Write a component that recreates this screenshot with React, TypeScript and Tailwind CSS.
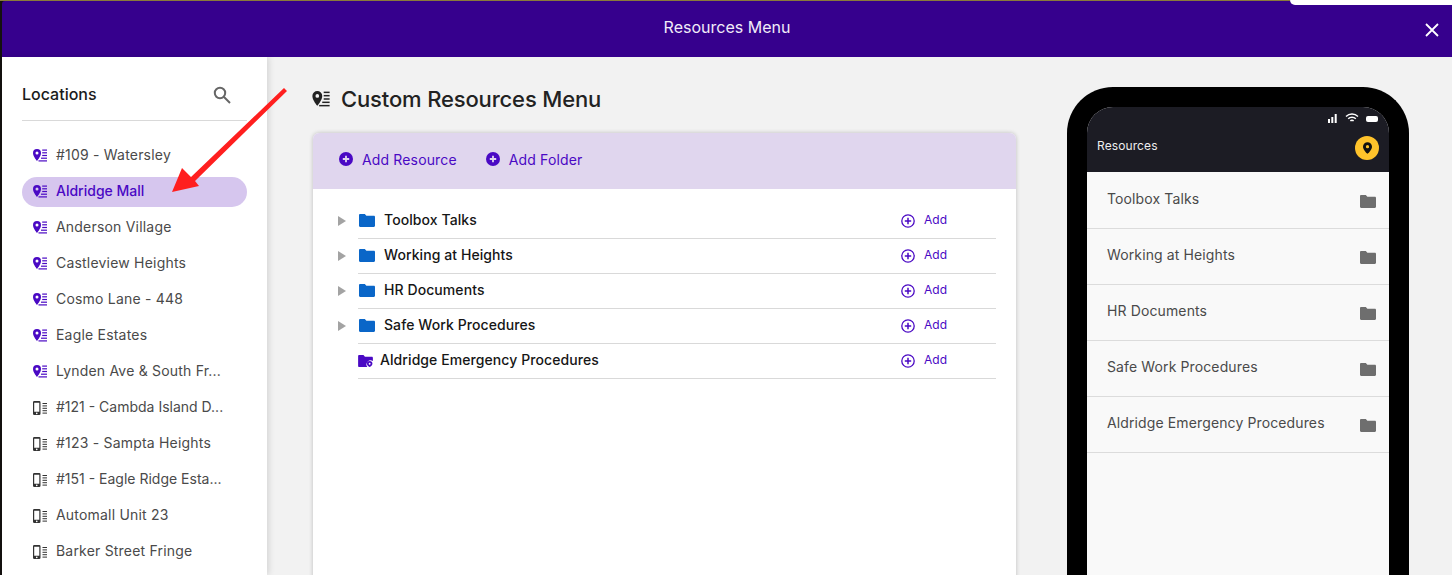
import React from "react";

const FONT = "font-['Inter','Noto_Sans',sans-serif]";

function PinList({ className }: { className?: string }) {
  return (
    <svg viewBox="0 0 14 13" className={className} fill="currentColor">
      <path fillRule="evenodd" d="M4 0a4 4 0 0 1 4 4c0 2.700-2.500 6.200-4 8C2.500 10.200 0 6.700 0 4a4 4 0 0 1 4-4Zm0 2.500a1.500 1.500 0 1 0 0 3 1.500 1.500 0 0 0 0-3Z" />
      <rect x="9.200" y="0.500" width="4.800" height="1.200" />
      <rect x="9.200" y="3.200" width="4.800" height="1.200" />
      <rect x="9.200" y="5.900" width="4.800" height="1.200" />
      <rect x="8" y="8.600" width="6" height="1.200" />
      <rect x="5.500" y="11.300" width="8.500" height="1.200" />
    </svg>
  );
}

function PhoneList({ className }: { className?: string }) {
  return (
    <svg viewBox="0 0 14 14" className={className} fill="currentColor">
      <path fillRule="evenodd" d="M1.300 0h4.900a1.300 1.300 0 0 1 1.300 1.300v11.400A1.300 1.300 0 0 1 6.200 14H1.300A1.300 1.300 0 0 1 0 12.700V1.300A1.300 1.300 0 0 1 1.300 0Zm-.1 1.800v9h5.100v-9H1.200Z" />
      <circle cx="3.750" cy="12.400" r="0.800" fill="#fff" />
      <rect x="9.500" y="2" width="4.500" height="1" />
      <rect x="9.500" y="4.400" width="4.500" height="1" />
      <rect x="9.500" y="6.800" width="4.500" height="1" />
      <rect x="9.500" y="9.200" width="4.500" height="1" />
      <rect x="9.500" y="11.600" width="4.500" height="1" />
    </svg>
  );
}

function Folder({ className }: { className?: string }) {
  return (
    <svg viewBox="0 0 16 13" className={className} fill="currentColor">
      <path d="M1.200 0h4.600l1.600 1.800h7.400c.7 0 1.200.5 1.200 1.200v8.800c0 .7-.5 1.200-1.200 1.200H1.200C.5 13 0 12.500 0 11.800V1.200C0 .5.500 0 1.200 0Z" />
    </svg>
  );
}

function PlusSolid({ className }: { className?: string }) {
  return (
    <svg viewBox="0 0 14 14" className={className}>
      <circle cx="7" cy="7" r="7" fill="currentColor" />
      <path d="M7 3.800v6.400M3.800 7h6.400" stroke="#e0d6ee" strokeWidth="1.800" />
    </svg>
  );
}

function PlusOutline({ className }: { className?: string }) {
  return (
    <svg viewBox="0 0 14 14" className={className} fill="none" stroke="currentColor">
      <circle cx="7" cy="7" r="6.200" strokeWidth="1.300" />
      <path d="M7 3.800v6.400M3.800 7h6.400" strokeWidth="1.500" />
    </svg>
  );
}

const locations: { name: string; kind: "pin" | "phone"; active?: boolean; tight?: boolean }[] = [
  { name: "#109 - Watersley", kind: "pin" },
  { name: "Aldridge Mall", kind: "pin", active: true },
  { name: "Anderson Village", kind: "pin" },
  { name: "Castleview Heights", kind: "pin" },
  { name: "Cosmo Lane - 448", kind: "pin" },
  { name: "Eagle Estates", kind: "pin" },
  { name: "Lynden Ave & South Fr...", kind: "pin" },
  { name: "#121 - Cambda Island D...", kind: "phone", tight: true },
  { name: "#123 - Sampta Heights", kind: "phone" },
  { name: "#151 - Eagle Ridge Esta...", kind: "phone", tight: true },
  { name: "Automall Unit 23", kind: "phone" },
  { name: "Barker Street Fringe", kind: "phone" },
];

const resources = [
  { name: "Toolbox Talks" },
  { name: "Working at Heights" },
  { name: "HR Documents" },
  { name: "Safe Work Procedures" },
  { name: "Aldridge Emergency Procedures", custom: true },
];

export default function App() {
  return (
    <div className={`relative h-[575px] w-[1452px] overflow-hidden bg-[#14110f] pl-[2px] pt-px ${FONT}`}>
      <div className="absolute left-0 top-0 h-px w-[1290px] bg-[#8a7a3a]" />
      <div className="absolute right-0 top-0 h-[5px] w-[162px] rounded-bl-[5px] bg-white" />

      <header className="flex h-[56px] items-center justify-center rounded-tl-[3px] bg-[#36008d] text-[16px] text-[#f1ecf8]">
        <span className="mb-[4px]">Resources Menu</span>
      </header>
      <svg viewBox="0 0 14 14" className="absolute left-[1425px] top-[23px] h-[14px] w-[14px]" stroke="#fff" strokeWidth="1.800">
        <path d="M1 1l12 12M13 1L1 13" />
      </svg>

      <div className="flex h-[518px] bg-[#f2f2f2]">
        <aside className="h-full w-[265px] shrink-0 bg-white pl-[20px] shadow-[2px_0_6px_rgba(0,0,0,0.12)]">
          <div className="flex h-[64px] w-[225px] items-center justify-between border-b border-[#d9d9d9] pt-[10px]">
            <h2 className="text-[16px] font-medium text-[#1b1b1b]">Locations</h2>
            <svg viewBox="0 0 18 18" className="mr-[16px] mt-[2px] h-[18px] w-[18px]" fill="none" stroke="#666" strokeWidth="2">
              <circle cx="7" cy="7" r="5.200" />
              <path d="M11 11l6 6" />
            </svg>
          </div>
          <ul className="mt-[20px] flex w-[225px] flex-col gap-[6px]">
            {locations.map((l) => (
              <li
                key={l.name}
                className={`flex h-[30px] items-center rounded-full pl-[11px] text-[14px] ${
                  l.active
                    ? "bg-[#d6c6ee] font-medium text-[#4a09c4]"
                    : l.tight
                      ? "text-[#4a4a4a]"
                      : "tracking-[0.2px] text-[#4a4a4a]"
                }`}
              >
                {l.kind === "pin" ? (
                  <PinList className="mb-px h-[13px] w-[14px] shrink-0 text-[#4a09c4]" />
                ) : (
                  <PhoneList className="mb-px h-[14px] w-[14px] shrink-0 text-[#333]" />
                )}
                <span className="mb-[4px] ml-[9px] whitespace-nowrap">{l.name}</span>
              </li>
            ))}
          </ul>
        </aside>

        <main className="ml-[45px] w-[704px] shrink-0 pt-[27px]">
          <div className="flex h-[30px] items-center">
            <PinList className="h-[16px] w-[18px] text-[#222]" />
            <h1 className="ml-[11px] text-[22px] font-medium tracking-[-0.15px] text-[#222]">Custom Resources Menu</h1>
          </div>
          <section className="ml-px mt-[19px] h-[500px] rounded-t-[6px] bg-white shadow-[0_0_4px_rgba(0,0,0,0.22)]">
            <div className="flex h-[56px] items-center rounded-t-[6px] bg-[#e0d6ee] pb-[4px] pl-[26px] text-[14px] tracking-[0.15px] text-[#4a09c4]">
              <PlusSolid className="h-[14px] w-[14px]" />
              <span className="ml-[9px]">Add Resource</span>
              <PlusSolid className="ml-[29px] h-[14px] w-[14px]" />
              <span className="ml-[9px]">Add Folder</span>
            </div>
            <div className="pt-[15px]">
              {resources.map((r) => (
                <div key={r.name} className="relative ml-[45px] mr-[20px] flex h-[35px] items-center border-b border-[#d9d9d9] pb-px">
                  {r.custom ? (
                    <svg viewBox="0 0 16 13" className="h-[12px] w-[15px] shrink-0 text-[#4a09c4]" fill="currentColor">
                      <path d="M1.200 0h4.600l1.600 1.800h7.400c.7 0 1.200.5 1.200 1.200v3.500a4.500 4.500 0 0 0-6 6.500H1.200C.5 13 0 12.500 0 11.800V1.200C0 .5.500 0 1.200 0Z" />
                      <path fillRule="evenodd" d="M12.500 6.500a3 3 0 0 1 3 3c0 1.500-1.600 3-3 3.500-1.400-.5-3-2-3-3.500a3 3 0 0 1 3-3Zm0 2a1 1 0 1 0 0 2 1 1 0 0 0 0-2Z" />
                    </svg>
                  ) : (
                    <>
                      <span className="absolute left-[-20px] top-[12px] h-0 w-0 border-y-[5px] border-l-[8px] border-y-transparent border-l-[#a3a3a3]" />
                      <Folder className="ml-px h-[13px] w-[16px] shrink-0 text-[#0a66c8]" />
                    </>
                  )}
                  <span className={`${r.custom ? "ml-[7px]" : "ml-[9px]"} mb-[2px] text-[14px] font-medium tracking-[0.08px] text-[#161616]`}>{r.name}</span>
                  <PlusOutline className="ml-auto mt-px h-[14px] w-[14px] shrink-0 text-[#4a09c4]" />
                  <span className="mb-px ml-[9px] mr-[49px] text-[12px] text-[#4a09c4]">Add</span>
                </div>
              ))}
            </div>
          </section>
        </main>

        <div className="ml-[51px] mt-[30px] h-[560px] w-[342px] shrink-0 rounded-t-[46px] border-x-[20px] border-t-[20px] border-black bg-[#f9f9f9]">
          <div className="rounded-t-[26px] bg-[#1c1c24]">
            <div className="flex h-[18px] items-end justify-end gap-[7px] pb-[2px] pr-[11px]">
              <svg viewBox="0 0 10 10" className="h-[10px] w-[10px]" fill="#fff">
                <rect x="0" y="6" width="2" height="4" />
                <rect x="3.300" y="4" width="2" height="6" />
                <rect x="6.700" y="1" width="2" height="9" />
              </svg>
              <svg viewBox="0 0 14 10" className="h-[10px] w-[14px]" fill="none" stroke="#fff" strokeWidth="1.400">
                <path d="M1 3.500a8.500 8.500 0 0 1 12 0M3.200 5.800a5.300 5.300 0 0 1 7.600 0M5.400 8a2.200 2.200 0 0 1 3.200 0" />
              </svg>
              <span className="mb-px h-[6px] w-[12px] rounded-[2px] bg-white" />
            </div>
            <div className="flex h-[47px] items-start justify-between pl-[10px] pr-[10px]">
              <span className="mt-[13px] text-[12px] leading-[15px] tracking-[0.1px] text-[#eeeeee]">Resources</span>
              <span className="mt-[11px] flex h-[24px] w-[24px] items-center justify-center rounded-full bg-[#ffc32b]">
                <svg viewBox="0 0 10 13" className="h-[12px] w-[9px]" fill="#111">
                  <path fillRule="evenodd" d="M5 0a5 5 0 0 1 5 5c0 3-3.300 6.500-5 8-1.700-1.500-5-5-5-8a5 5 0 0 1 5-5Zm0 3.200a1.800 1.800 0 1 0 0 3.600 1.800 1.800 0 0 0 0-3.600Z" />
                </svg>
              </span>
            </div>
          </div>
          <div className="pt-px">
            {resources.map((r) => (
              <div key={r.name} className="flex h-[56px] items-center justify-between border-b border-[#dcdcdc] pl-[20px] pr-[13px] text-[14px] tracking-[0.12px] text-[#4a4a4a]">
                <span className="mb-[4px]">{r.name}</span>
                <Folder className="mt-px h-[13px] w-[16px] text-[#6e6e6e]" />
              </div>
            ))}
          </div>
        </div>
      </div>

      <svg viewBox="0 0 120 110" className="absolute left-[170px] top-[85px] h-[110px] w-[120px]" fill="#ff1f1f">
        <polygon points="2,107 12,83 21,92 114,3 117,6 25,96 29,101" />
      </svg>
    </div>
  );
}
